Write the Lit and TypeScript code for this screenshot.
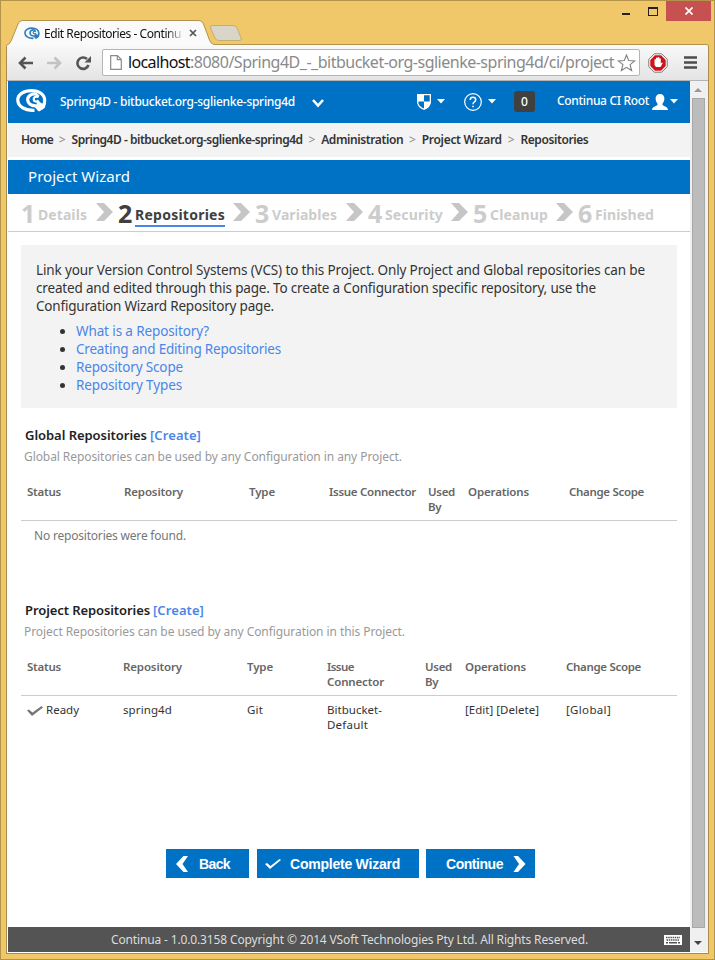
import { LitElement, html, css, svg } from "lit";
import { customElement, property } from "lit/decorators.js";

/** A single line of text whose tracking is adjusted to fill `w` pixels. */
@customElement("fit-text")
class FitText extends LitElement {
  @property({ type: Number }) w = 0;
  @property() text = "";
  static styles = css`
    :host { display: inline-block; white-space: pre; }
    .t { display: inline-block; white-space: pre; }
  `;
  render() {
    return html`<span class="t">${this.text}</span>`;
  }
  updated() {
    const el = this.renderRoot.querySelector(".t") as HTMLElement;
    el.style.letterSpacing = "0px";
    const natural = el.getBoundingClientRect().width;
    const gap = (this.w - natural) / this.text.length;
    el.style.letterSpacing = `${gap.toFixed(3)}px`;
  }
}

const t = (text: string, w: number, cls = "") =>
  html`<fit-text class=${cls} .text=${text} .w=${w}></fit-text>`;

const swirl = (color: string) => svg`
  <g fill="none" stroke=${color}>
    <path d="M18.500 21.300C8.500 21.800 1.800 17 1.800 11C1.800 5 8 1.600 15.500 1.600C23 1.600 28.700 5.500 28.700 11.500C28.700 14 28 16 26.800 17.500" stroke-width="3.200"/>
    <path d="M20.500 5C14.500 4.300 11.500 7.500 11.700 11C12 14.500 15 16.800 19.500 16.800C21 17.500 22 19.500 23.500 21" stroke-width="3.200"/>
    <path d="M22.500 7.800C19.500 7 17.500 8.300 17.700 10.500C18 12.600 20.500 13.300 22.500 11.500" stroke-width="2.200"/>
  </g>
  <path d="M20 3.800L23.500 6.500L22 9L19.500 7.500ZM21.500 10.500L24.500 13.500L27 15L29.800 13L29 18.500L26.500 20.500L23 22.500L20 18Z" fill=${color}/>`;

const caret = html`<svg class="caret" width="8" height="5" viewBox="0 0 8 5"><path d="M0 0H8L4 4.6Z" fill="#fff"/></svg>`;

@customElement("app-root")
class AppRoot extends LitElement {
  static styles = css`
    :host { display: block; width: 715px; height: 960px; overflow: hidden; font-family: "Noto Sans", "Open Sans", sans-serif; font-size: 12px; color: #333; }
    * { box-sizing: border-box; }
    svg { display: block; flex: none; }
    .window { height: 960px; background: #f0c869; border: 1px solid #b3944b; display: flex; flex-direction: column; padding: 0 5px 5px 5px; }
    .titlebar { height: 43px; display: flex; position: relative; flex: none; }
    .tabs { position: absolute; left: 0; top: 19px; z-index: 1; }
    .tab-content { position: absolute; left: 18px; top: 23px; z-index: 2; display: flex; align-items: center; height: 18px; }
    .tab-content fit-text { margin-left: 4px; color: #111; mask-image: linear-gradient(90deg, #000 122px, #0003 137px); }
    .tab-content .x { margin-left: 8px; }
    .controls { margin-left: auto; display: flex; height: 20px; align-items: flex-start; }
    .min { width: 8px; height: 2px; background: #222; margin: 12px 18px 0 0; }
    .max { width: 10px; height: 9px; border: 1px solid #222; border-top-width: 2px; margin: 6px 8px 0 0; }
    .close { width: 45px; height: 20px; background: #c75050; display: grid; place-items: center; margin-right: -2px; }
    .frame { flex: 1; min-height: 0; border: 1px solid #a98e4c; border-top-color: #b3944b; border-radius: 3px 3px 0 0; background: #fff; display: flex; flex-direction: column; padding: 0 0 1px 1px; }
    .toolbar { height: 36px; margin-left: -1px; padding-left: 11px; flex: none; display: flex; align-items: center; background: linear-gradient(#f9f9f9, #e4e4e4); border-bottom: 1px solid #b4b4b4; border-radius: 3px 3px 0 0; }
    .omni { margin-left: 6px; width: 538px; flex: none; height: 27px; border: 1px solid #b5b5b5; border-radius: 2px; background: #fff; display: flex; align-items: center; padding-left: 7px; }
    .url { margin-left: 6px; width: 489px; flex: none; white-space: nowrap; font-size: 16px; line-height: 22px; color: #8a8a8a; display: flex; margin-top: -2px; }
    .url .host { color: #111; }
    .abp { margin-left: 8px; }
    .menu { margin-left: 16px; }
    .body { flex: 1; min-height: 0; display: flex; }
    .page { width: 682px; flex: none; display: flex; flex-direction: column; background: #fff; }
    .scroll { width: 18px; background: #f0f0f0; display: flex; flex-direction: column; align-items: flex-start; padding-left: 2px; }
    .scroll .up { margin: 7px 0 6px 2px; }
    .thumb { width: 13px; height: 830px; background: #bcbcbc; border: 1px solid #a8a8a8; }
    .scroll .down { margin: 13px 0 0 2px; }
    .header { height: 42px; background: #0072c6; color: #fff; display: flex; align-items: center; flex: none; padding-left: 8px; font-weight: 500; }
    .header .logo { margin-top: -2px; }
    .header .proj { margin-left: 13px; margin-top: -1px; }
    .header .chev { margin-left: 17px; margin-top: 2px; }
    .header .shield { margin-left: 93px; }
    .header .caret { margin-left: 6px; margin-top: -1px; }
    .header .help { margin-left: 19px; }
    .count { width: 21px; height: 21px; margin: -1px 0 0 18px; background: #404040; border-radius: 3px; text-align: center; line-height: 21px; font-size: 12px; }
    .header .user { margin-left: 22px; margin-top: -3px; }
    .header .person { margin-left: 3px; }
    .header .person + .caret { margin-left: 2px; }
    .crumbs { height: 34px; flex: none; background: #f3f3f3; display: flex; align-items: center; padding-left: 13px; font-weight: 600; }
    .crumbs fit-text { margin-top: -1px; }
    .sep { color: #888; font-weight: 400; width: 18.6px; text-align: center; margin-top: -1px; }
    .title { height: 34px; flex: none; margin-top: 3px; background: #0072c6; color: #fff; font-size: 15px; line-height: 33px; padding-left: 20px; }
    .steps { height: 38px; flex: none; border-bottom: 1px solid #ccc; display: flex; padding-left: 13px; color: #ccc; font-weight: 700; }
    .num { font-size: 25px; line-height: 39px; width: 17px; }
    .step { font-size: 14px; line-height: 41px; height: 33px; }
    .on { color: #404040; }
    .step.on { border-bottom: 2px solid #4a86e8; }
    .arrow { margin-top: 9px; }
    .content { flex: 1; padding: 13px 13px 0; display: flex; flex-direction: column; }
    .info { height: 163px; background: #f3f3f3; padding: 16px 15px 0; font-size: 13.5px; line-height: 18px; }
    .info .line { display: block; height: 18px; }
    ul { margin: 7px 0 0; padding-left: 40px; }
    li { height: 18px; }
    .link { color: #4a86e8; }
    .h { display: flex; height: 18px; line-height: 18px; margin: 18px 0 0 4px; font-size: 13px; font-weight: 600; color: #222; }
    .h .link { margin-left: 3px; }
    .sub { color: #999; margin: 4px 0 0 3px; height: 16px; line-height: 18px; }
    .row { display: grid; padding-left: 6px; line-height: 15px; font-size: 11.5px; align-items: start; align-content: start; }
    .row.g { grid-template-columns: 97px 125px 80px 99px 40px 101px 1fr; }
    .row.p { grid-template-columns: 96px 124px 80px 98px 40px 101px 1fr; }
    .th { height: 57px; padding-top: 20px; border-bottom: 1px solid #ccc; font-weight: 600; color: #666; }
    .td { padding-top: 6px; color: #333; height: 51px; }
    .cell { display: flex; flex-direction: column; }
    .cell.ready { flex-direction: row; }
    .ready svg { margin: 4px 3px 0 0; }
    .none { padding: 7px 0 0 13px; height: 62px; line-height: 15px; color: #777; }
    .btns { display: flex; margin: 102px 0 0 145px; font-family: "Liberation Sans", Arial, sans-serif; font-weight: 700; font-size: 14px; color: #fff; }
    .btn { height: 29px; background: #0072c6; display: flex; align-items: center; }
    .back { width: 83px; padding-left: 10px; gap: 11px; }
    .done { width: 162px; margin-left: 8px; padding-left: 8px; gap: 9px; }
    .next { width: 109px; margin-left: 7px; padding-left: 20px; gap: 10px; }
    .footer { height: 25px; flex: none; background: #545454; color: #ddd; display: flex; align-items: center; padding-left: 103px; }
    .footer svg { margin-left: 76px; }
  `;

  private head(cls: string, connector: unknown) {
    return html`<div class="row th ${cls}">
      <div class="cell">${t("Status", 34)}</div>
      <div class="cell">${t("Repository", 59)}</div>
      <div class="cell">${t("Type", 26)}</div>
      <div class="cell">${connector}</div>
      <div class="cell">${t("Used", 27)}${t("By", 13)}</div>
      <div class="cell">${t("Operations", 61)}</div>
      <div class="cell">${t("Change Scope", 75)}</div>
    </div>`;
  }

  private step(n: string, label: string, w: number, on = false) {
    const c = on ? "on" : "";
    return html`<span class="num ${c}">${n}</span>${t(label, w, "step " + c)}`;
  }

  private arrow(ml: number, mr: number) {
    return html`<svg class="arrow" style="margin-left:${ml}px;margin-right:${mr}px" width="17" height="18" viewBox="0 0 17 18"><path d="M0 0H8L17 9L8 18H0L8 9Z" fill="#c6c6c6"/></svg>`;
  }

  render() {
    return html`<div class="window">
      <div class="titlebar">
        <svg class="tabs" width="240" height="26" viewBox="6 20 240 26">
          <path d="M210.500 28Q210 25.500 212 25.500H233Q236 25.500 237 28L241 38Q242 40.500 240 40.500H219Q216 40.500 215 38Z" fill="#d9d5c8" stroke="#c4ad70"/>
          <path d="M7 46V45Q10 44 11.500 40L18 24Q19.500 20.500 22 20.500H199Q202 20.500 203.500 24L209.500 40Q211 44 214 44.500V46Z" fill="#fafafa"/>
          <path d="M7 45Q10 44 11.500 40L18 24Q19.500 20.500 22 20.500H199Q202 20.500 203.500 24L209.500 40Q211 44 214 44.500" fill="none" stroke="#b3944b"/>
        </svg>
        <div class="tab-content">
          <svg width="16" height="13" viewBox="0 0 31 24">${swirl("#2f7fc0")}</svg>
          ${t("Edit Repositories - Continu", 137)}
          <svg class="x" width="8" height="8" viewBox="0 0 8 8"><path d="M1 1L7 7M7 1L1 7" stroke="#555" stroke-width="1.700"/></svg>
        </div>
        <div class="controls">
          <div class="min"></div><div class="max"></div>
          <div class="close"><svg width="8" height="8" viewBox="0 0 8 8"><path d="M.5 .5L7.500 7.500M7.500 .5L.5 7.500" stroke="#fff" stroke-width="1.700"/></svg></div>
        </div>
      </div>
      <div class="frame">
        <div class="toolbar">
          <svg width="78" height="18" viewBox="0 0 78 18" fill="none">
            <path d="M15 9H3M7.500 3.500L2 9L7.500 14.500" stroke="#555" stroke-width="2.600"/>
            <path d="M29 9H41M36.500 3.500L42 9L36.500 14.500" stroke="#c2c2c2" stroke-width="2.600"/>
            <path d="M69 5A5.700 5.700 0 1 0 70.500 11" stroke="#555" stroke-width="2.600"/><path d="M73 2V8.500H66.500Z" fill="#555"/>
          </svg>
          <div class="omni">
            <svg width="12" height="15" viewBox="0 0 12 15"><path d="M.7 .7H7.500L11.300 4.500V14.300H.7ZM7.300 .7V4.700H11.300" fill="#fff" stroke="#8c8c8c" stroke-width="1.200"/></svg>
            <div class="url">${t("localhost", 62, "host")}${t(":8080/Spring4D_-_bitbucket-org-sglienke-spring4d/ci/project", 424)}</div>
            <svg width="19" height="18" viewBox="0 0 19 18"><path d="M9.500 1L11.700 6.500L17.700 6.900L13.100 10.700L14.600 16.500L9.500 13.300L4.400 16.500L5.900 10.700L1.300 6.900L7.300 6.500Z" fill="#fff" stroke="#808080" stroke-width="1.100"/></svg>
          </div>
          <svg class="abp" width="20" height="20" viewBox="0 0 20 20"><path d="M6.300 .8H13.700L19.200 6.300V13.700L13.700 19.200H6.300L.8 13.700V6.300Z" fill="#fff" stroke="#777" stroke-width="1"/><path d="M6.900 2.300H13.100L17.700 6.900V13.100L13.100 17.700H6.900L2.300 13.100V6.900Z" fill="#d0121b"/><path d="M6.500 6.500Q7.200 5.500 8 6.500V9V5Q9 4 9.700 5V8.500V4.500Q10.600 3.600 11.300 4.600V9V5.500Q12.300 4.800 12.800 5.800V10.500L14 9.500Q15 9.500 14.500 10.600L12.500 14H8L6.500 12Z" fill="#fff"/></svg>
          <svg class="menu" width="13" height="13" viewBox="0 0 13 13"><path d="M0 1.500H13M0 6.500H13M0 11.500H13" stroke="#4d4d4d" stroke-width="2.600"/></svg>
        </div>
        <div class="body">
          <div class="page">
            <div class="header">
              <svg class="logo" width="31" height="24" viewBox="0 0 31 24">${swirl("#fff")}</svg>
              ${t("Spring4D - bitbucket.org-sglienke-spring4d", 235, "proj")}
              <svg class="chev" width="12" height="9" viewBox="0 0 12 9"><path d="M1 1L6 6.500L11 1" fill="none" stroke="#fff" stroke-width="2.600"/></svg>
              <svg class="shield" width="14" height="16" viewBox="0 0 13 16" preserveAspectRatio="none"><path d="M0 0H13V8Q13 13 6.500 16Q0 13 0 8Z" fill="#fff"/><path d="M6.500 1.200H11.800V7.500H6.500ZM1.200 7.500H6.500V14.500Q1 12 1.200 7.500Z" fill="#0072c6"/></svg>${caret}
              <svg class="help" width="18" height="18" viewBox="0 0 18 18" fill="none" stroke="#fff"><circle cx="9" cy="9" r="8.300" stroke-width="1.200"/><path d="M6.200 7Q6.200 4.300 9 4.300Q11.700 4.300 11.700 6.700Q11.700 8.100 10.200 9Q9 9.800 9 11.300M9 12.700V14.300" stroke-width="1.500"/></svg>${caret}
              <div class="count">0</div>
              ${t("Continua CI Root", 92, "user")}
              <svg class="person" width="16" height="16" viewBox="0 0 16 16"><path d="M8 0C11 0 12.600 2 12.400 5C12.200 7.500 11 9 10.300 10C10.300 12.500 16 12 16 16H0C0 12 5.700 12.500 5.700 10C5 9 3.800 7.500 3.600 5C3.400 2 5 0 8 0Z" fill="#fff"/></svg>${caret}
            </div>
            <div class="crumbs">
              ${t("Home", 32)}<span class="sep">&gt;</span>${t("Spring4D - bitbucket.org-sglienke-spring4d", 231)}<span class="sep">&gt;</span>${t("Administration", 82)}<span class="sep">&gt;</span>${t("Project Wizard", 80)}<span class="sep">&gt;</span>${t("Repositories", 68)}
            </div>
            <div class="title">${t("Project Wizard", 102)}</div>
            <div class="steps">
              ${this.step("1", "Details", 49)}${this.arrow(9, 5)}
              ${this.step("2", "Repositories", 90, true)}${this.arrow(8, 5)}
              ${this.step("3", "Variables", 65)}${this.arrow(9, 5)}
              ${this.step("4", "Security", 58)}${this.arrow(8, 5)}
              ${this.step("5", "Cleanup", 58)}${this.arrow(8, 5)}
              ${this.step("6", "Finished", 59)}
            </div>
            <div class="content">
              <div class="info">
                <div class="line">${t("Link your Version Control Systems (VCS) to this Project. Only Project and Global repositories can be", 609)}</div>
                <div class="line">${t("created and edited through this page. To create a Configuration specific repository, use the", 560)}</div>
                <div class="line">${t("Configuration Wizard Repository page.", 238)}</div>
                <ul>
                  <li>${t("What is a Repository?", 133, "link")}</li>
                  <li>${t("Creating and Editing Repositories", 205, "link")}</li>
                  <li>${t("Repository Scope", 107, "link")}</li>
                  <li>${t("Repository Types", 106, "link")}</li>
                </ul>
              </div>
              <div class="h">${t("Global Repositories", 122)}${t("[Create]", 51, "link")}</div>
              <div class="sub">${t("Global Repositories can be used by any Configuration in any Project.", 378)}</div>
              ${this.head("g", t("Issue Connector", 87))}
              <div class="none">${t("No repositories were found.", 152)}</div>
              <div class="h second">${t("Project Repositories", 125)}${t("[Create]", 51, "link")}</div>
              <div class="sub">${t("Project Repositories can be used by any Configuration in this Project.", 381)}</div>
              ${this.head("p", html`${t("Issue", 27)}${t("Connector", 57)}`)}
              <div class="row td p">
                <div class="cell ready"><svg width="16" height="10" viewBox="0 0 16 10"><path d="M0 4.500L2 3.500L5.500 6.500L14.500 0L16 1.500L5 10Z" fill="#777"/></svg>${t("Ready", 33)}</div>
                <div class="cell">${t("spring4d", 49)}</div>
                <div class="cell">${t("Git", 16)}</div>
                <div class="cell">${t("Bitbucket-", 55)}${t("Default", 41)}</div>
                <div class="cell"></div>
                <div class="cell">${t("[Edit] [Delete]", 74)}</div>
                <div class="cell">${t("[Global]", 45)}</div>
              </div>
              <div class="btns">
                <div class="btn back"><svg width="12" height="16" viewBox="0 0 12 16"><path d="M7.500 0H12L6.500 8L12 16H7.500L0 8Z" fill="#fff"/></svg>${t("Back", 31)}</div>
                <div class="btn done"><svg width="16" height="10" viewBox="0 0 16 10"><path d="M0 5L2 4L5.500 7L14.500 0L16 1L5 10Z" fill="#fff"/></svg>${t("Complete Wizard", 110)}</div>
                <div class="btn next">${t("Continue", 57)}<svg width="13" height="16" viewBox="0 0 12 16"><path d="M4.500 0H0L5.500 8L0 16H4.500L12 8Z" fill="#fff"/></svg></div>
              </div>
            </div>
            <div class="footer">${t("Continua - 1.0.0.3158 Copyright © 2014 VSoft Technologies Pty Ltd. All Rights Reserved.", 477)}
              <svg width="18" height="10" viewBox="0 0 18 10"><path d="M0 0H18V10H0Z" fill="#fff"/><path d="M2 2.500H16M2.500 5H15.500" stroke="#545454" stroke-width="1.400" stroke-dasharray="1.500 .7"/><path d="M2 7.700H4M5 7.700H13M14 7.700H16" stroke="#545454" stroke-width="1.500"/></svg>
            </div>
          </div>
          <div class="scroll">
            <svg class="up" width="8" height="4" viewBox="0 0 8 4"><path d="M0 4L4 0L8 4Z" fill="#999"/></svg>
            <div class="thumb"></div>
            <svg class="down" width="8" height="4" viewBox="0 0 8 4"><path d="M0 0H8L4 4Z" fill="#444"/></svg>
          </div>
        </div>
      </div>
    </div>`;
  }
}
